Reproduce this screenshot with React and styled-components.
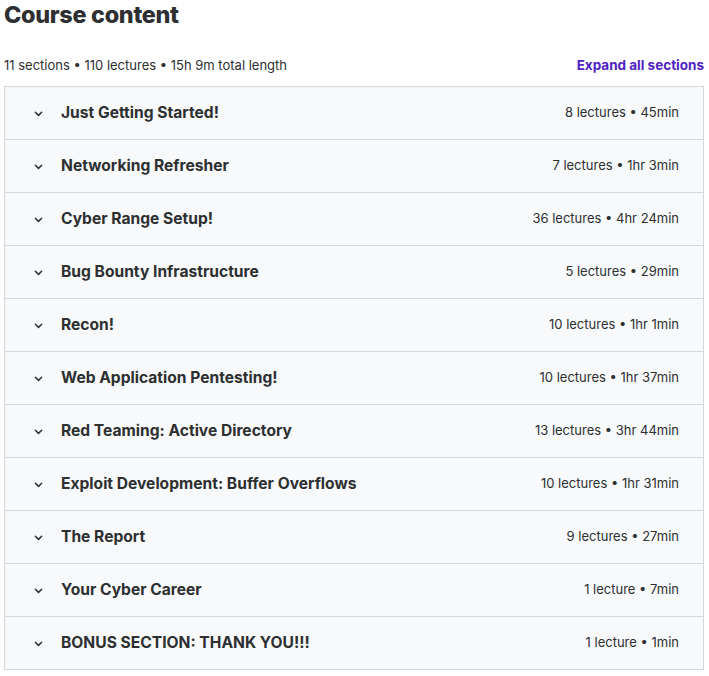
import React from "react";
import styled, { createGlobalStyle } from "styled-components";

const Global = createGlobalStyle`
  html, body { margin: 0; padding: 0; background: #fff; }
  *, *::before, *::after { box-sizing: border-box; }
  body { font-family: Inter, "Noto Sans", sans-serif; color: #2d2f31; }
`;

const Page = styled.div`
  padding: 0 5px 0 4px;
`;

const Heading = styled.h2`
  margin: 0;
  font-size: 23.4px;
  line-height: 29px;
  font-weight: 800;
  letter-spacing: -0.3px;
  color: #2d2f31;
`;

const SummaryBar = styled.div`
  display: flex;
  justify-content: space-between;
  align-items: flex-end;
  margin-top: 26px;
  margin-bottom: 11px;
`;

const Summary = styled.span`
  font-size: 13px;
  line-height: 20px;
  color: #2d2f31;
`;

const ExpandButton = styled.button`
  background: none;
  border: none;
  padding: 0;
  font-family: inherit;
  font-size: 13.5px;
  font-weight: 700;
  color: #5022c3;
  cursor: pointer;
  line-height: 20px;
`;

const List = styled.div`
  border: 1px solid #d1d7dc;
  border-bottom: none;
`;

const Row = styled.div`
  display: flex;
  align-items: center;
  height: 53px;
  background: #f7f9fa;
  border-bottom: 1px solid #d1d7dc;
  padding: 0 24px 2px 26px;
`;

const Chevron = styled.svg`
  width: 15px;
  height: 15px;
  flex: none;
  margin-right: 15px;
  margin-top: 2px;
`;

const Title = styled.span`
  flex: 1;
  font-size: 15.6px;
  font-weight: 700;
  color: #2d2f31;
`;

const Meta = styled.span`
  font-size: 13px;
  color: #2d2f31;
`;

const sections = [
  ["Just Getting Started!", "8 lectures • 45min"],
  ["Networking Refresher", "7 lectures • 1hr 3min"],
  ["Cyber Range Setup!", "36 lectures • 4hr 24min"],
  ["Bug Bounty Infrastructure", "5 lectures • 29min"],
  ["Recon!", "10 lectures • 1hr 1min"],
  ["Web Application Pentesting!", "10 lectures • 1hr 37min"],
  ["Red Teaming: Active Directory", "13 lectures • 3hr 44min"],
  ["Exploit Development: Buffer Overflows", "10 lectures • 1hr 31min"],
  ["The Report", "9 lectures • 27min"],
  ["Your Cyber Career", "1 lecture • 7min"],
  ["BONUS SECTION: THANK YOU!!!", "1 lecture • 1min"],
];

export default function App() {
  return (
    <Page>
      <Global />
      <Heading>Course content</Heading>
      <SummaryBar>
        <Summary>11 sections • 110 lectures • 15h 9m total length</Summary>
        <ExpandButton>Expand all sections</ExpandButton>
      </SummaryBar>
      <List>
        {sections.map(([t, m]) => (
          <Row key={t}>
            <Chevron viewBox="0 0 24 24" fill="none" stroke="#2d2f31" strokeWidth="2.4" strokeLinecap="round" strokeLinejoin="round">
              <path d="M7 10l5 5 5-5" />
            </Chevron>
            <Title>{t}</Title>
            <Meta>{m}</Meta>
          </Row>
        ))}
      </List>
    </Page>
  );
}
